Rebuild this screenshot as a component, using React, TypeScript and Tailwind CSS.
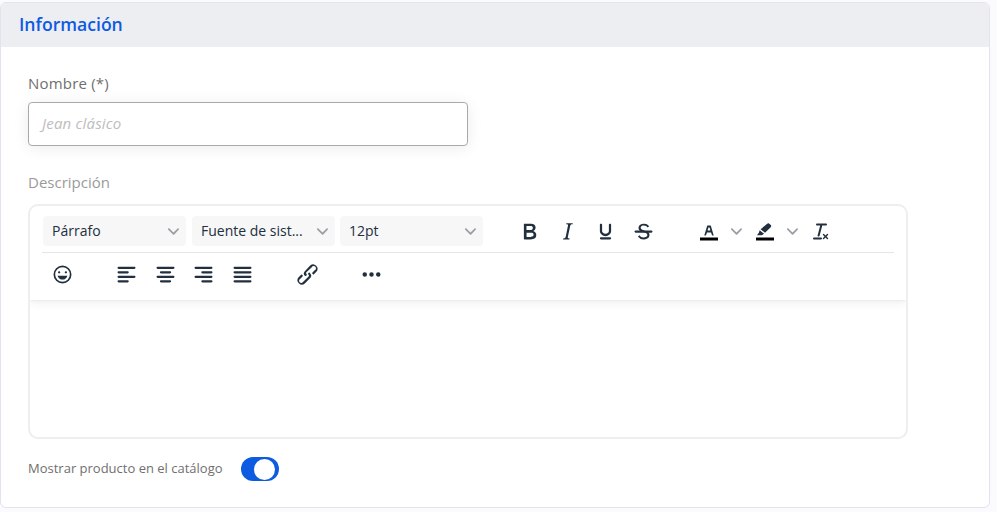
import { ReactNode } from "react";

const paths = {
  bold: "M7.8 19c-.3 0-.5 0-.6-.2l-.2-.5V5.7c0-.2 0-.4.2-.5l.6-.2h5c1.5 0 2.7.3 3.5 1 .7.6 1.1 1.4 1.1 2.5a3 3 0 0 1-.6 1.9c-.4.6-1 1-1.6 1.2.4.1.9.3 1.3.6s.8.7 1 1.2c.4.4.5 1 .5 1.6 0 1.3-.4 2.3-1.3 3-.8.7-2.1 1-3.8 1H7.8zm5-8.3c.6 0 1.2-.1 1.6-.5.4-.3.6-.7.6-1.3 0-1.1-.8-1.7-2.3-1.7H9.3v3.5h3.4zm.5 6c.7 0 1.3-.1 1.7-.4.4-.4.6-.9.6-1.5s-.2-1-.7-1.4c-.4-.3-1-.4-2-.4H9.4v3.8h4z",
  italic: "M16.7 4.7l-.1.9h-.3c-.6 0-1 0-1.4.3-.3.3-.4.6-.5 1.1l-2.1 9.8v.6c0 .5.4.8 1.4.8h.2l-.2.8H8l.2-.8h.2c1.1 0 1.8-.5 2-1.5l2-9.8.1-.5c0-.6-.4-.8-1.4-.8h-.3l.2-.9h5.8z",
  underline: "M16 5c.6 0 1 .4 1 1v5.5a4 4 0 0 1-.4 1.8l-1 1.4a5.3 5.3 0 0 1-5.5 1 5 5 0 0 1-1.6-1c-.5-.4-.8-.9-1.1-1.4a4 4 0 0 1-.4-1.8V6c0-.6.4-1 1-1s1 .4 1 1v5.5c0 .3 0 .6.2 1l.6.7a3.3 3.3 0 0 0 2.2.8 3.4 3.4 0 0 0 2.2-.8c.3-.2.4-.5.6-.8l.2-.9V6c0-.6.4-1 1-1zM8 17h8c.6 0 1 .4 1 1s-.4 1-1 1H8a1 1 0 0 1 0-2z",
  strike: "M15.6 8.5c-.5-.7-1-1.1-1.3-1.3-.6-.4-1.3-.6-2-.6-2.7 0-2.8 1.7-2.8 2.1 0 1.6 1.8 2 3.2 2.3 4.4.9 4.6 2.8 4.6 3.9 0 1.4-.7 4.1-5 4.1A6.2 6.2 0 0 1 7 16.4l1.5-1.1c.4.6 1.6 2 3.7 2 1.6 0 2.5-.4 3-1.2.4-.8.3-2-.8-2.6-.7-.4-1.6-.7-2.9-1-1-.2-3.9-.8-3.9-3.6C7.6 6 10.3 5 12.4 5c2.9 0 4.2 1.6 4.7 2.4l-1.5 1.1z",
  strikeLine: "M5 11h14a1 1 0 0 1 0 2H5a1 1 0 0 1 0-2z",
  clear: "M13.2 6a1 1 0 0 1 0 .2l-2.6 10a1 1 0 0 1-1 .8h-.2a.8.8 0 0 1-.8-1l2.6-10H8a1 1 0 1 1 0-2h9a1 1 0 0 1 0 2h-3.8zM5 18h7a1 1 0 0 1 0 2H5a1 1 0 0 1 0-2zm13 1.5L16.5 18 15 19.5a.7.7 0 0 1-1-1l1.5-1.5-1.5-1.5a.7.7 0 0 1 1-1l1.5 1.5 1.5-1.5a.7.7 0 0 1 1 1L17.5 17l1.5 1.5a.7.7 0 0 1-1 1z",
  emoji: "M9 11c.6 0 1-.4 1-1s-.4-1-1-1a1 1 0 0 0-1 1c0 .6.4 1 1 1zm6 0c.6 0 1-.4 1-1s-.4-1-1-1a1 1 0 0 0-1 1c0 .6.4 1 1 1zm-3 5.5c2.1 0 4-1.5 4.4-3.5H7.6c.5 2 2.3 3.5 4.4 3.5zM12 4a8 8 0 1 0 0 16 8 8 0 0 0 0-16zm0 14.5a6.5 6.5 0 1 1 0-13 6.5 6.5 0 0 1 0 13z",
  left: "M5 5h14c.6 0 1 .4 1 1s-.4 1-1 1H5a1 1 0 1 1 0-2zm0 4h8c.6 0 1 .4 1 1s-.4 1-1 1H5a1 1 0 1 1 0-2zm0 8h8c.6 0 1 .4 1 1s-.4 1-1 1H5a1 1 0 0 1 0-2zm0-4h14c.6 0 1 .4 1 1s-.4 1-1 1H5a1 1 0 0 1 0-2z",
  center: "M5 5h14c.6 0 1 .4 1 1s-.4 1-1 1H5a1 1 0 1 1 0-2zm3 4h8c.6 0 1 .4 1 1s-.4 1-1 1H8a1 1 0 1 1 0-2zm0 8h8c.6 0 1 .4 1 1s-.4 1-1 1H8a1 1 0 0 1 0-2zm-3-4h14c.6 0 1 .4 1 1s-.4 1-1 1H5a1 1 0 0 1 0-2z",
  right: "M5 5h14c.6 0 1 .4 1 1s-.4 1-1 1H5a1 1 0 1 1 0-2zm6 4h8c.6 0 1 .4 1 1s-.4 1-1 1h-8a1 1 0 0 1 0-2zm0 8h8c.6 0 1 .4 1 1s-.4 1-1 1h-8a1 1 0 0 1 0-2zm-6-4h14c.6 0 1 .4 1 1s-.4 1-1 1H5a1 1 0 0 1 0-2z",
  justify: "M5 5h14c.6 0 1 .4 1 1s-.4 1-1 1H5a1 1 0 1 1 0-2zm0 4h14c.6 0 1 .4 1 1s-.4 1-1 1H5a1 1 0 1 1 0-2zm0 4h14c.6 0 1 .4 1 1s-.4 1-1 1H5a1 1 0 0 1 0-2zm0 4h14c.6 0 1 .4 1 1s-.4 1-1 1H5a1 1 0 0 1 0-2z",
  link: "M6.2 12.3a1 1 0 0 1 1.4 1.4l-2 2a2 2 0 1 0 2.6 2.8l4.8-4.8a1 1 0 0 0 0-1.4 1 1 0 1 1 1.4-1.3 2.9 2.9 0 0 1 0 4L9.6 20a3.9 3.9 0 0 1-5.5-5.5l2-2zm11.6-.6a1 1 0 0 1-1.4-1.4l2-2a2 2 0 1 0-2.6-2.8L11 10a1 1 0 0 0 0 1.4A1 1 0 1 1 9.6 13a2.9 2.9 0 0 1 0-4L14.4 4a3.9 3.9 0 0 1 5.5 5.5l-2 2z",
  more: "M6 10a2 2 0 0 0-2 2c0 1.1.9 2 2 2a2 2 0 0 0 2-2 2 2 0 0 0-2-2zm12 0a2 2 0 0 0-2 2c0 1.1.9 2 2 2a2 2 0 0 0 2-2 2 2 0 0 0-2-2zm-6 0a2 2 0 0 0-2 2c0 1.1.9 2 2 2a2 2 0 0 0 2-2 2 2 0 0 0-2-2z",
  textColor: "M8.7 16h-.8a.5.5 0 0 1-.5-.6l2.7-9c.1-.3.3-.4.5-.4h2.8c.2 0 .4.1.5.4l2.7 9a.5.5 0 0 1-.5.6h-.8a.5.5 0 0 1-.4-.4l-.7-2.2c0-.3-.3-.4-.5-.4h-3.4c-.2 0-.4.1-.5.4l-.7 2.2c0 .3-.2.4-.4.4zm2.6-7.6l-.6 2a.5.5 0 0 0 .5.6h1.6a.5.5 0 0 0 .5-.6l-.6-2c0-.3-.3-.4-.5-.4h-.4c-.2 0-.4.1-.5.4z",
  highlight: "M4 15.8l2-2.8.6-2.3 4.4 3.5-2.2 1.6zM7.6 9.7l4.4 3.5 5.7-5.5c.7-.7.7-1.5.1-2.1l-1.6-1.4c-.6-.6-1.4-.5-2 .1z",
};

function Icon({ d, swatch, over }: { d: string; swatch?: boolean; over?: string }) {
  return (
    <svg width="27" height="27" viewBox="0 0 24 24" className="fill-[#222f3e]">
      {swatch && <path d="M3 18h18v3H3z" className="fill-black" />}
      <path d={d} fillRule="evenodd" />
      {over && <path d={over} />}
    </svg>
  );
}

function Chevron() {
  return (
    <svg width="11" height="11" viewBox="0 0 10 10">
      <path d="M8.7 2.2c.3-.3.8-.3 1 0 .4.4.4.9 0 1.2L5.7 7.8c-.3.3-.9.3-1.2 0L.2 3.4a.8.8 0 0 1 0-1.2c.3-.3.8-.3 1.1 0L5 6l3.7-3.8z" fill="#9a9fa6" />
    </svg>
  );
}

function Select({ label }: { label: string }) {
  return (
    <div className="flex h-[30px] w-[143px] items-center justify-between rounded bg-[#f7f7f7] pl-[9px] pr-[7px] text-sm text-[#222f3e]">
      <span>{label}</span>
      <Chevron />
    </div>
  );
}

function Btn({ children, w = "w-[38px]" }: { children: ReactNode; w?: string }) {
  return <div className={`flex h-6 shrink-0 items-center justify-center ${w}`}>{children}</div>;
}

export default function App() {
  return (
    <div className="h-[512px] w-[997px] overflow-hidden bg-[#fbfbfd] pt-[2px] font-['Open_Sans','Noto_Sans',sans-serif]">
      <section className="h-[506px] w-[990px] overflow-hidden rounded-md border border-[#e2e3ef] bg-white">
        <header className="flex h-11 items-center bg-[#edeef2] px-[18px]">
          <h2 className="text-[17.6px] leading-none font-semibold text-[#0d5be1]">Información</h2>
        </header>

        <div className="pt-[26px] pl-[27px]">
          <label className="block text-[15px] leading-5 tracking-[0.2px] text-[#6f6f6f]">Nombre (*)</label>
          <div className="mt-[9px] flex h-11 w-[440px] items-center rounded border border-[#a9a9a9] bg-white px-[13px] pb-[2px] text-[15px] tracking-[0.2px] text-[#bdbdbd] italic shadow-[0_2px_16px_rgba(0,0,0,0.08)]">
            Jean clásico
          </div>

          <label className="mt-[26px] block text-[15px] leading-5 text-[#9a9a9a]">Descripción</label>

          <div className="mt-[12px] h-[235px] w-[880px] overflow-hidden rounded-[10px] border-2 border-[#eeeeee] bg-white">
            <div className="h-[94px] shadow-[0_4px_8px_rgba(34,47,62,0.06),0_1px_2px_rgba(34,47,62,0.06)]">
              <div className="mx-3 flex h-[47px] items-start border-b border-[#e5e5e5] pt-[10px]">
                <div className="ml-[1px] flex gap-[6px]">
                  <Select label="Párrafo" />
                  <Select label="Fuente de sist..." />
                </div>
                <div className="ml-[5px]"><Select label="12pt" /></div>
                <div className="ml-[27px] flex h-[30px] items-center">
                  <Btn><Icon d={paths.bold} /></Btn>
                  <Btn><Icon d={paths.italic} /></Btn>
                  <Btn><Icon d={paths.underline} /></Btn>
                  <Btn><Icon d={paths.strike} over={paths.strikeLine} /></Btn>
                  <div className="ml-[35px] flex items-center">
                    <Btn w="w-6"><Icon d={paths.textColor} swatch /></Btn>
                    <Btn w="w-[30px] mr-[2px]"><Chevron /></Btn>
                    <Btn w="w-6"><Icon d={paths.highlight} swatch /></Btn>
                    <Btn w="w-[30px] mr-[2px]"><Chevron /></Btn>
                    <Btn w="w-6"><Icon d={paths.clear} /></Btn>
                  </div>
                </div>
              </div>
              <div className="mx-3 flex h-[47px] items-center pb-[5px]">
                <Btn w="w-[40px]"><Icon d={paths.emoji} /></Btn>
                <div className="ml-[25px] flex items-center">
                  <Btn w="w-[39px]"><Icon d={paths.left} /></Btn>
                  <Btn w="w-[38px]"><Icon d={paths.center} /></Btn>
                  <Btn w="w-[39px]"><Icon d={paths.right} /></Btn>
                  <Btn w="w-[39px]"><Icon d={paths.justify} /></Btn>
                </div>
                <div className="ml-[26px]"><Btn><Icon d={paths.link} /></Btn></div>
                <div className="ml-[26px]"><Btn><Icon d={paths.more} /></Btn></div>
              </div>
            </div>
          </div>

          <div className="mt-[18px] flex items-center">
            <span className="w-[213px] text-[13px] text-[#6f6f6f]">Mostrar producto en el catálogo</span>
            <div className="flex h-6 w-[38px] items-center justify-end rounded-full bg-[#0d5be1] pr-[4px]">
              <div className="size-[21px] rounded-full bg-white" />
            </div>
          </div>
        </div>
      </section>
    </div>
  );
}
